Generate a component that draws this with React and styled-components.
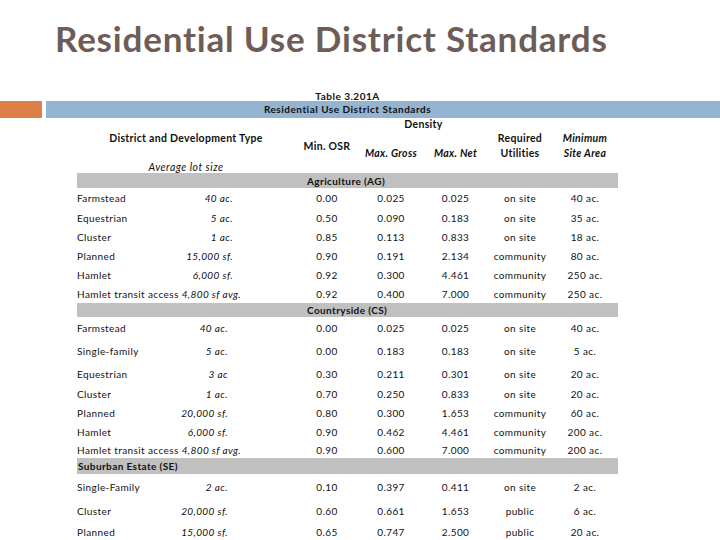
import React from "react";
import styled, { createGlobalStyle } from "styled-components";

const COLS = "90px 128px 64px 64px 65px 64px 66px";

const sections = [
  {
    label: "Agriculture (AG)",
    start: 3,
    barH: 15,
    lotPad: 62,
    rows: [
      { h: 20, name: "Farmstead", lot: "40 ac.", v: ["0.00", "0.025", "0.025", "on site", "40 ac."] },
      { h: 19, name: "Equestrian", lot: "5 ac.", v: ["0.50", "0.090", "0.183", "on site", "35 ac."] },
      { h: 19, name: "Cluster", lot: "1 ac.", v: ["0.85", "0.113", "0.833", "on site", "18 ac."] },
      { h: 19, name: "Planned", lot: "15,000 sf.", v: ["0.90", "0.191", "2.134", "community", "80 ac."] },
      { h: 19, name: "Hamlet", lot: "6,000 sf.", v: ["0.92", "0.300", "4.461", "community", "250 ac."] },
      { h: 19, name: "Hamlet transit access", transit: "4,800 sf avg.", v: ["0.92", "0.400", "7.000", "community", "250 ac."] },
    ],
  },
  {
    label: "Countryside (CS)",
    start: 3,
    barH: 14,
    lotPad: 67,
    rows: [
      { h: 22, name: "Farmstead", lot: "40 ac.", v: ["0.00", "0.025", "0.025", "on site", "40 ac."] },
      { h: 24, name: "Single-family", lot: "5 ac.", v: ["0.00", "0.183", "0.183", "on site", "5 ac."] },
      { h: 21, name: "Equestrian", lot: "3 ac", v: ["0.30", "0.211", "0.301", "on site", "20 ac."] },
      { h: 19, name: "Cluster", lot: "1 ac.", v: ["0.70", "0.250", "0.833", "on site", "20 ac."] },
      { h: 19, name: "Planned", lot: "20,000 sf.", v: ["0.80", "0.300", "1.653", "community", "60 ac."] },
      { h: 19, name: "Hamlet", lot: "6,000 sf.", v: ["0.90", "0.462", "4.461", "community", "200 ac."] },
      { h: 17, name: "Hamlet transit access", transit: "4,800 sf avg.", v: ["0.90", "0.600", "7.000", "community", "200 ac."] },
    ],
  },
  {
    label: "Suburban Estate (SE)",
    start: 1,
    barH: 16,
    lotPad: 67,
    rows: [
      { h: 26, name: "Single-Family", lot: "2 ac.", v: ["0.10", "0.397", "0.411", "on site", "2 ac."] },
      { h: 22, name: "Cluster", lot: "20,000 sf.", v: ["0.60", "0.661", "1.653", "public", "6 ac."] },
      { h: 20, name: "Planned", lot: "15,000 sf.", v: ["0.65", "0.747", "2.500", "public", "20 ac."] },
    ],
  },
];

export default function App() {
  return (
    <>
      <GlobalStyle />
      <Slide>
        <Title>Residential Use District Standards</Title>
        <Caption>Table 3.201A</Caption>
        <Banner>
          <Accent />
          <BlueBar>Residential Use District Standards</BlueBar>
        </Banner>
        <HeaderGrid>
          <HeadCell $col="4 / span 2" $row="1">Density</HeadCell>
          <HeadCell $col="1 / span 2" $row="2">District and Development Type</HeadCell>
          <HeadCell $col="3" $row="2 / span 2">Min. OSR</HeadCell>
          <HeadCell $col="4" $row="3" $italic>Max. Gross</HeadCell>
          <HeadCell $col="5" $row="3" $italic>Max. Net</HeadCell>
          <HeadCell $col="6" $row="2 / span 2">Required<br />Utilities</HeadCell>
          <HeadCell $col="7" $row="2 / span 2" $italic>Minimum<br />Site Area</HeadCell>
          <LotHead>Average lot size</LotHead>
        </HeaderGrid>
        <Body>
          {sections.map((s) => (
            <React.Fragment key={s.label}>
              <SectionBar $h={s.barH}>
                <SectionLabel $start={s.start}>{s.label}</SectionLabel>
              </SectionBar>
              {s.rows.map((r, i) => (
                <Row key={i} $h={r.h}>
                  {r.transit ? (
                    <Name $wide>
                      {r.name} <Lot as="span">{r.transit}</Lot>
                    </Name>
                  ) : (
                    <>
                      <Name>{r.name}</Name>
                      <Lot $pad={s.lotPad}>{r.lot}</Lot>
                    </>
                  )}
                  {r.v.map((val, j) => (
                    <Num key={j}>{val}</Num>
                  ))}
                </Row>
              ))}
            </React.Fragment>
          ))}
        </Body>
      </Slide>
    </>
  );
}

const GlobalStyle = createGlobalStyle`
  html, body {
    margin: 0;
    padding: 0;
    background: #fff;
  }
  body {
    font-family: Lato, "DejaVu Sans", sans-serif;
    font-variant-ligatures: none;
    color: #111;
  }
`;

const Slide = styled.div`
  width: 720px;
  height: 540px;
  overflow: hidden;
  background: #fff;
  display: flex;
  flex-direction: column;
`;

const Title = styled.h1`
  margin: 0;
  box-sizing: border-box;
  height: 91px;
  padding: 17px 0 0 55px;
  font-family: Lato, sans-serif;
  font-weight: 700;
  font-size: 35px;
  letter-spacing: 0.8px;
  line-height: 1.2;
  color: #6e5d57;
  flex-shrink: 0;
`;

const Caption = styled.div`
  margin-left: 77px;
  width: 541px;
  height: 10px;
  font-size: 10px;
  font-weight: 700;
  letter-spacing: 0.5px;
  line-height: 10px;
  text-align: center;
  flex-shrink: 0;
`;

const Banner = styled.div`
  display: flex;
  gap: 4px;
  height: 17px;
  flex-shrink: 0;
`;

const Accent = styled.div`
  width: 42px;
  background: #dd8047;
`;

const BlueBar = styled.div`
  flex: 1;
  background: #94b4d2;
  padding: 0 102px 0 31px;
  font-size: 10px;
  font-weight: 700;
  letter-spacing: 0.5px;
  line-height: 17px;
  text-align: center;
`;

const HeaderGrid = styled.div`
  display: grid;
  grid-template-columns: ${COLS};
  grid-template-rows: 13px 15px 15px 12px;
  margin-left: 77px;
  width: 541px;
  flex-shrink: 0;
`;

const HeadCell = styled.div`
  grid-column: ${(p) => p.$col};
  grid-row: ${(p) => p.$row};
  display: flex;
  align-items: center;
  justify-content: center;
  text-align: center;
  font-size: 10.5px;
  font-weight: 700;
  letter-spacing: 0.3px;
  font-style: ${(p) => (p.$italic ? "italic" : "normal")};
  line-height: 15px;
  white-space: nowrap;
`;

const LotHead = styled.div`
  grid-column: 1 / span 2;
  grid-row: 4;
  text-align: center;
  font-size: 10.5px;
  font-style: italic;
  letter-spacing: 0.5px;
  line-height: 12px;
`;

const Body = styled.div`
  margin-left: 77px;
  width: 541px;
  display: flex;
  flex-direction: column;
`;

const SectionBar = styled.div`
  display: grid;
  grid-template-columns: ${COLS};
  height: ${(p) => p.$h}px;
  background: #c0c0c0;
  flex-shrink: 0;
`;

const SectionLabel = styled.div`
  grid-column: ${(p) => p.$start} / -1;
  padding-left: ${(p) => (p.$start === 1 ? 1 : 12)}px;
  font-size: 10px;
  font-weight: 700;
  letter-spacing: 0.4px;
  display: flex;
  align-items: center;
  white-space: nowrap;
`;

const Row = styled.div`
  display: grid;
  grid-template-columns: ${COLS};
  height: ${(p) => p.$h}px;
  align-items: center;
  font-size: 10px;
  letter-spacing: 0.4px;
  flex-shrink: 0;
`;

const Name = styled.div`
  grid-column: ${(p) => (p.$wide ? "1 / span 2" : "1")};
  white-space: nowrap;
`;

const Lot = styled.div`
  font-style: italic;
  text-align: right;
  padding-right: ${(p) => p.$pad || 0}px;
  white-space: nowrap;
`;

const Num = styled.div`
  text-align: center;
  white-space: nowrap;
`;
